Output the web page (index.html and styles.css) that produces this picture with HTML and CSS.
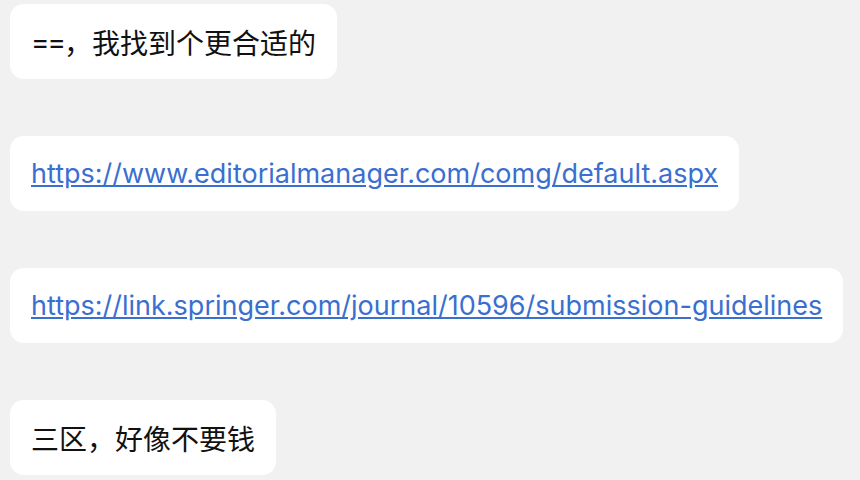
FILE: index.html
```html
<!DOCTYPE html>
<html lang="zh-CN">
<head>
  <meta charset="UTF-8" />
  <title>聊天记录</title>
  <link rel="stylesheet" href="styles.css">
</head>
<body>
  <div class="chat">
    <div class="bubble"><span class="eq">==</span>，我找到个更合适的</div>
    <div class="bubble"><a href="#">https://www.editorialmanager.com/comg/default.aspx</a></div>
    <div class="bubble"><a href="#">https://link.springer.com/journal/10596/submission-guidelines</a></div>
    <div class="bubble">三区，好像不要钱</div>
  </div>
</body>
</html>
```

FILE: styles.css
```css
body {
  margin: 0;
  background-color: #f1f1f1;
  font-family: Inter, "Noto Sans CJK SC", sans-serif;
}

/* 消息列表 */
.chat {
  display: flex;
  flex-direction: column;
  align-items: flex-start;
  gap: 57px;
  padding: 4px 10px;
}

/* 白色气泡 */
.bubble {
  background-color: #fff;
  border-radius: 14px;
  padding: 0 21px;
  height: 75px;
  display: flex;
  align-items: center;
  font-size: 28px;
  color: #111;
  white-space: nowrap;
}

.eq {
  letter-spacing: -2px;
}

.bubble a {
  font-size: 27px;
  color: #3b6fcf;
  text-decoration: underline;
  text-underline-offset: 2px;
}
```
